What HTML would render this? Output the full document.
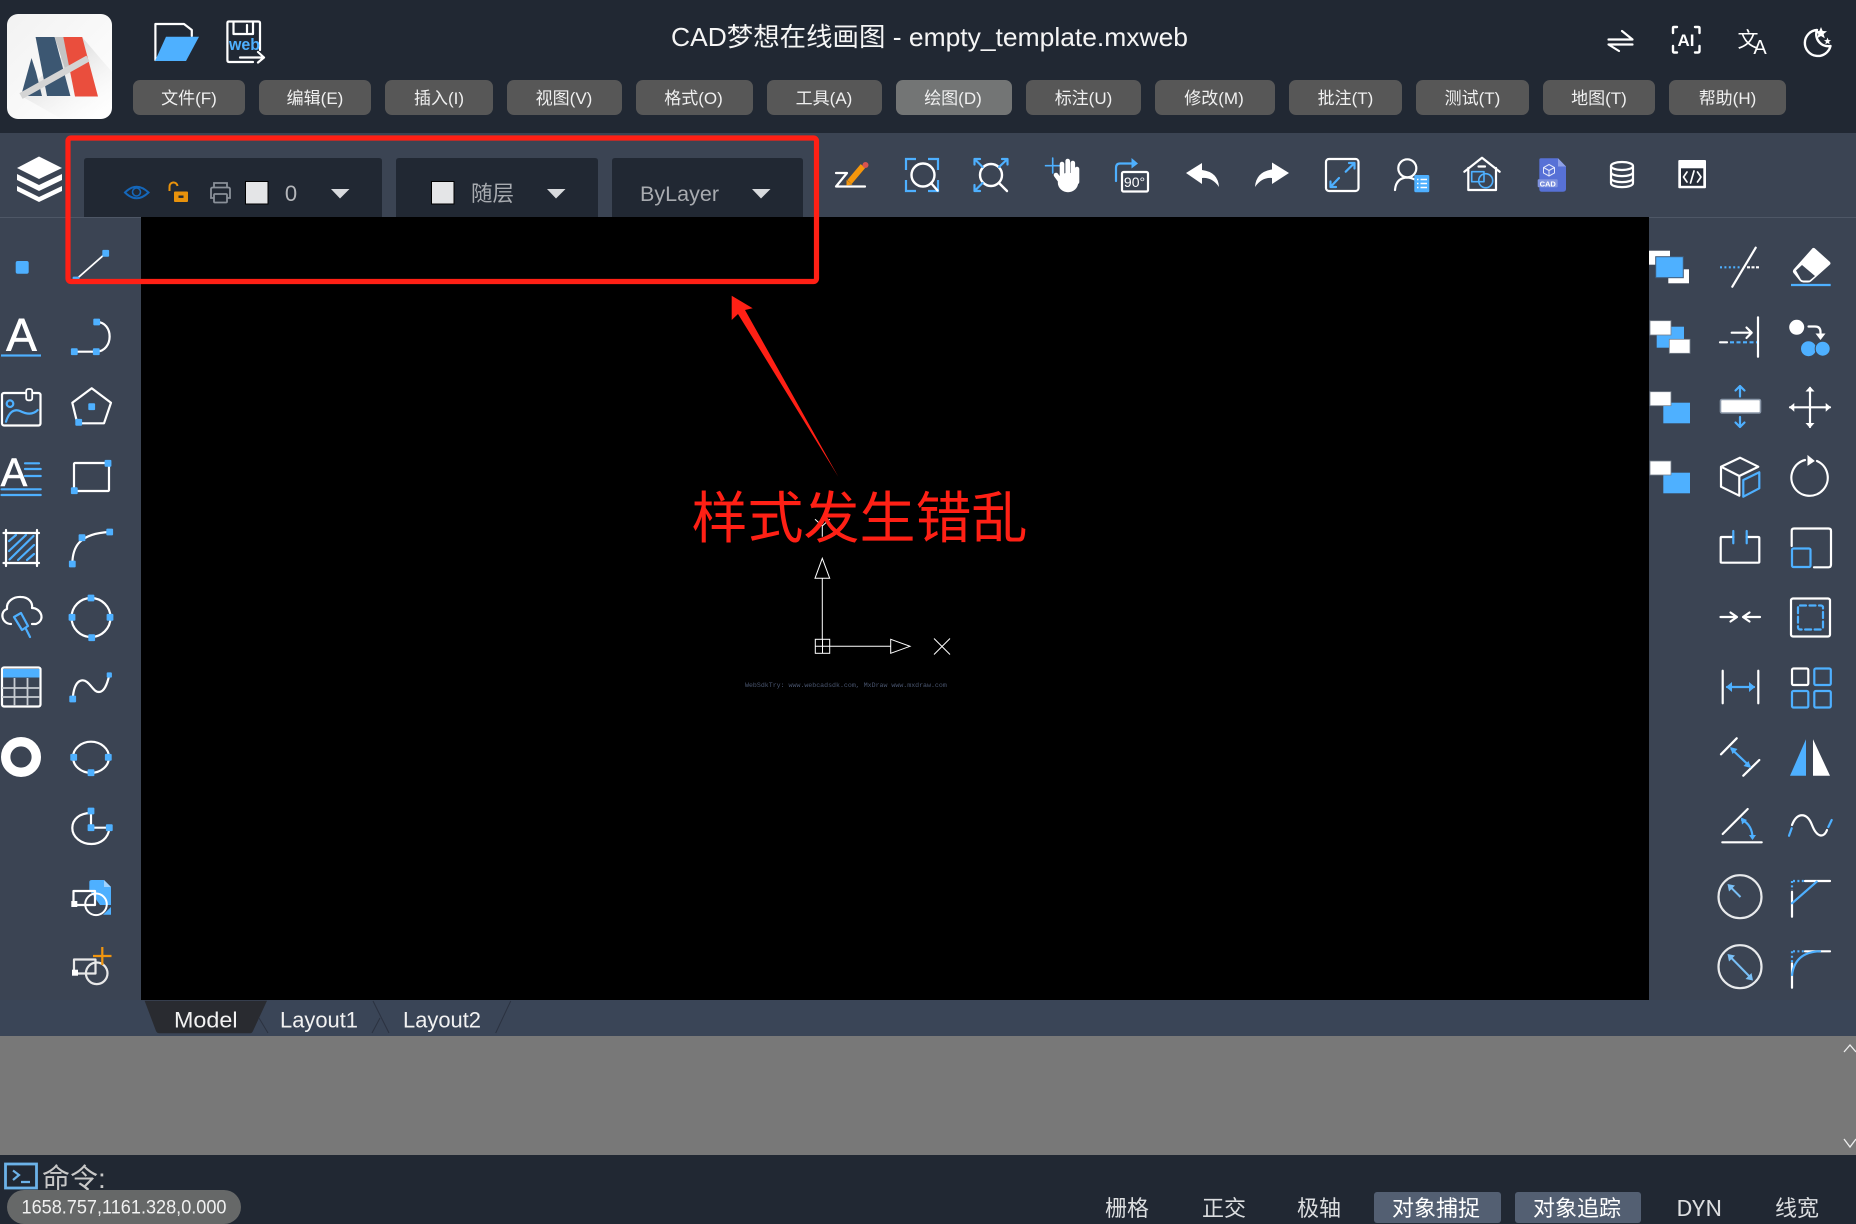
<!DOCTYPE html>
<html lang="zh-CN">
<head>
<meta charset="utf-8">
<title>CAD梦想在线画图</title>
<style>
html,body{margin:0;padding:0;width:1856px;height:1224px;overflow:hidden;background:#3b4453}
svg{position:absolute;left:0;top:0;display:block}
text{font-family:"Liberation Sans","Noto Sans CJK SC",sans-serif}
.w{fill:none;stroke:#fff;stroke-width:2.2;stroke-linecap:round;stroke-linejoin:round}
.b{fill:none;stroke:#4eb0ff;stroke-width:2.2;stroke-linecap:round;stroke-linejoin:round}
.bf{fill:#4eb0ff}
.wf{fill:#fff}
.m{fill:#f0f0f0;font-size:17px;text-anchor:middle}
.s{fill:#dcdee0;font-size:22px;font-family:"WenQuanYi Zen Hei","Noto Sans CJK SC",sans-serif}
</style>
</head>
<body>
<svg width="1856" height="1224" viewBox="0 0 1856 1224" xmlns="http://www.w3.org/2000/svg">
<defs>
<rect id="q" x="-3.4" y="-3.4" width="6.8" height="6.8" rx="1" fill="#4eb0ff"/>
<linearGradient id="lg" x1="0" y1="0" x2="1" y2="1"><stop offset="0" stop-color="#f2f2f2"/><stop offset="1" stop-color="#fff"/></linearGradient>
<linearGradient id="sh" x1="0.2" y1="0" x2="0.9" y2="1"><stop offset="0" stop-color="#c8c8c8"/><stop offset="1" stop-color="#fff" stop-opacity="0"/></linearGradient>
</defs>

<!-- regions -->
<rect x="0" y="0" width="1856" height="133" fill="#212833"/>
<rect x="0" y="133" width="1856" height="84" fill="#3b4453"/>
<rect x="0" y="217" width="141" height="1" fill="#4e5766"/>
<rect x="1649" y="217" width="207" height="1" fill="#4e5766"/>
<rect x="141" y="217" width="1508" height="783" fill="#000"/>
<rect x="0" y="1000" width="1856" height="36" fill="#3a4557"/>
<rect x="0" y="1036" width="1856" height="119" fill="#787878"/>
<rect x="0" y="1155" width="1856" height="69" fill="#212833"/>

<!-- logo -->
<rect x="7" y="14" width="105" height="105" rx="11" fill="url(#lg)"/>
<path d="M82,37 L112,72 V108 A11,11 0 0 1 101,119 H62 L21,96 Z" fill="url(#sh)"/>
<path d="M35.6,37 L54.6,37 L70.4,96 L47,96 Z" fill="#3c5772"/>
<path d="M31.5,58 L21,96 L42,96 L36,72 Z" fill="#3c5772"/>
<path d="M54.6,37 H63.3 L72,62 L66,72 Z" fill="#c4c4c4"/>
<path d="M63.3,37 L82.2,37 L98,96.5 L75,96.5 Z" fill="#ea4e3d"/>
<path d="M21,96 L88,58.5" stroke="#d4d4d4" stroke-width="6.5" fill="none"/>

<!-- folder -->
<path d="M155.4,60 V24 H184 L191.8,30 V36" class="w"/>
<path d="M166,36.7 H199 L186,61 H155 Z" class="bf"/>
<!-- save web -->
<path d="M253,62 H229 Q227.4,62 227.4,60 V23 Q227.4,21.5 229,21.5 H258 Q260,21.5 260,23 V50" class="w"/>
<path d="M233.5,22 V34 H253 V22 M247,25 V32" class="w"/>
<text x="229" y="50" font-size="17" font-weight="700" fill="#4eb0ff" textLength="31" lengthAdjust="spacingAndGlyphs">web</text>
<path d="M240,57.5 H264 M258,52 L264,57.5 L258,62.5" class="w"/>

<!-- title -->
<text x="929.5" y="46" font-size="26" fill="#f5f5f5" text-anchor="middle" textLength="517" lengthAdjust="spacingAndGlyphs">CAD梦想在线画图 - empty_template.mxweb</text>

<!-- right top icons -->
<path d="M1608.5,39.5 H1632.5 L1622,31 M1632.5,44.5 H1608.5 L1619,51" class="w"/>
<path d="M1677,27 H1674 Q1673,27 1673,28 V33 M1695,27 H1698 Q1699.5,27 1699.5,28 V33 M1673,46 V51 Q1673,52.5 1674,52.5 H1677 M1699.5,46 V51 Q1699.5,52.5 1698,52.5 H1695" class="w" style="stroke-width:2.4"/>
<text x="1686" y="46" font-size="17" font-weight="700" fill="#fff" text-anchor="middle">AI</text>
<text x="1748" y="47" font-size="21" fill="#fff" text-anchor="middle">文</text>
<text x="1760" y="54" font-size="20" fill="#fff" text-anchor="middle">A</text>
<path d="M1817,30 A13,13 0 1 0 1830.5,46 A12,12 0 0 1 1817,30 Z" class="w" style="stroke-width:2.4"/>
<path d="M1821,27 L1822.7,31 L1827,31.3 L1823.6,34 L1824.8,38.2 L1821,36 L1817.2,38.2 L1818.4,34 L1815,31.3 L1819.3,31 Z" class="wf"/>
<path d="M1827.5,37.5 L1828.5,40 L1831,40.2 L1829,41.8 L1829.7,44.2 L1827.5,43 L1825.3,44.2 L1826,41.8 L1824,40.2 L1826.5,40 Z" class="wf"/>

<!-- menu -->
<g fill="#575757">
<rect x="133" y="80" width="112" height="35" rx="7"/>
<rect x="259" y="80" width="112" height="35" rx="7"/>
<rect x="385" y="80" width="108" height="35" rx="7"/>
<rect x="507" y="80" width="115" height="35" rx="7"/>
<rect x="636" y="80" width="117" height="35" rx="7"/>
<rect x="767" y="80" width="115" height="35" rx="7"/>
<rect x="896" y="80" width="116" height="35" rx="7" fill="#737575"/>
<rect x="1026" y="80" width="115" height="35" rx="7"/>
<rect x="1155" y="80" width="120" height="35" rx="7"/>
<rect x="1289" y="80" width="113" height="35" rx="7"/>
<rect x="1416" y="80" width="113" height="35" rx="7"/>
<rect x="1543" y="80" width="112" height="35" rx="7"/>
<rect x="1669" y="80" width="117" height="35" rx="7"/>
</g>
<text class="m" x="189" y="104">文件(F)</text>
<text class="m" x="315" y="104">编辑(E)</text>
<text class="m" x="439" y="104">插入(I)</text>
<text class="m" x="564" y="104">视图(V)</text>
<text class="m" x="693.5" y="104">格式(O)</text>
<text class="m" x="824" y="104">工具(A)</text>
<text class="m" x="953" y="104">绘图(D)</text>
<text class="m" x="1083.5" y="104">标注(U)</text>
<text class="m" x="1214" y="104">修改(M)</text>
<text class="m" x="1345.5" y="104">批注(T)</text>
<text class="m" x="1472.5" y="104">测试(T)</text>
<text class="m" x="1599" y="104">地图(T)</text>
<text class="m" x="1727.5" y="104">帮助(H)</text>

<!-- layers icon -->
<path d="M39,156.5 L62,168 L39,179 L17,168 Z" class="wf"/>
<path d="M17,174 L39,185 L62,174 L62,180 L39,191 L17,180 Z" class="wf"/>
<path d="M17,186 L39,197 L62,186 L62,191 L39,202 L17,191 Z" class="wf"/>

<!-- dropdowns -->
<path d="M84,217 V161 Q84,158 87,158 H379 Q382,158 382,161 V217 Z" fill="#212833"/>
<path d="M396,217 V161 Q396,158 399,158 H595 Q598,158 598,161 V217 Z" fill="#212833"/>
<path d="M612,217 V161 Q612,158 615,158 H800 Q803,158 803,161 V217 Z" fill="#212833"/>
<!-- eye -->
<path d="M125,192.5 Q136.5,181 148.5,192.5 Q136.5,204 125,192.5 Z" fill="none" stroke="#1567ba" stroke-width="2"/>
<circle cx="136.5" cy="192" r="4" fill="none" stroke="#1567ba" stroke-width="1.6"/>
<!-- lock -->
<path d="M169.5,191 V187 A4,4 0 0 1 177.5,186" fill="none" stroke="#e8920c" stroke-width="2"/>
<rect x="174" y="191.5" width="14" height="10.5" rx="1" fill="#e8920c"/>
<rect x="178.5" y="195.5" width="5" height="2.4" fill="#212833"/>
<!-- printer -->
<path d="M214,188 V183 H227 V188 M214,198 H211 V189 Q211,187.5 213,187.5 H228 Q230,187.5 230,189 V198 H227" fill="none" stroke="#8a9099" stroke-width="1.8"/>
<rect x="214" y="194" width="13" height="8.5" rx="1" fill="none" stroke="#8a9099" stroke-width="1.8"/>
<rect x="245.5" y="181.5" width="22.5" height="22.5" fill="#e4e5e7" stroke="#000" stroke-width="1"/>
<text x="291" y="201" font-size="22" fill="#b4b6ba" text-anchor="middle">0</text>
<path d="M331,189 H349.5 L340,198.5 Z" fill="#d8dadd"/>
<rect x="431.5" y="181.5" width="22.5" height="22.5" fill="#e4e5e7" stroke="#000" stroke-width="1"/>
<text x="471" y="201" font-size="21.5" fill="#a8abb0">随层</text>
<path d="M547,189 H565.5 L556,198.5 Z" fill="#d8dadd"/>
<text x="640" y="201" font-size="21" fill="#a8abb0" textLength="79" lengthAdjust="spacingAndGlyphs">ByLayer</text>
<path d="M752,189 H770.5 L761,198.5 Z" fill="#d8dadd"/>

<!-- toolbar icons -->
<path d="M836,173 H847 L836,186.5 H865" class="w"/>
<path d="M863,166 L849.5,182" stroke="#f5960c" stroke-width="6" fill="none"/>
<path d="M846.5,180 L852.5,184.5 L846.5,185.5 Z" fill="#f5960c"/>
<circle cx="865.5" cy="165" r="3" fill="#d9534f"/>

<path d="M906,170 V159 H916 M928,159 H938 V170 M906,180 V191 H916 M928,191 H938 V180" class="b" style="stroke-linecap:butt;stroke-linejoin:miter"/>
<circle cx="923" cy="175" r="11.5" class="w" style="stroke-width:2.4"/>
<path d="M931,183 L937.5,190.5" class="w" style="stroke-width:2.4"/>

<circle cx="991" cy="175" r="11" class="w" style="stroke-width:2.4"/>
<path d="M999,183 L1007,191" class="w" style="stroke-width:2.4"/>
<path d="M982.6,167 L975,159.5 M974.5,164.5 V159 H980 M999,167 L1007,159.5 M1002,159 H1007.5 V164.5 M982.6,183 L975,190.5 M974.5,185 V191 H980" class="b"/>

<path d="M1045.5,165.7 H1060.5 M1052.7,158 V173" class="b" style="stroke-width:1.6"/>
<g stroke="#fff" stroke-width="4.6" stroke-linecap="round" fill="none">
<path d="M1062,164 V180 M1067.7,161 V180 M1072.8,163 V180 M1077,169 V182 M1056,175 L1064,186"/>
</g>
<ellipse cx="1068" cy="182.5" rx="10.2" ry="9.7" fill="#fff"/>

<rect x="1122" y="172" width="26" height="19.5" rx="1.5" class="w"/>
<text x="1134.5" y="187" font-size="14" fill="#fff" text-anchor="middle">90°</text>
<path d="M1116,181 V168 Q1116,163.5 1120,163.5 H1132" class="b"/>
<path d="M1131.5,158 L1138,163.5 L1131.5,168.5 Z" class="bf"/>

<path d="M1186,173 L1202,163 V170 Q1218,172 1219,187 Q1212,177 1202,178 V184 Z" class="wf"/>
<path d="M1289,173 L1272,162.5 V169.5 Q1256,172 1255,187 Q1262,177 1272,178 V184 Z" class="wf"/>

<rect x="1326" y="159" width="32.5" height="32" rx="3" class="w"/>
<path d="M1345.7,171.7 L1354,163.5 M1349,163 H1354.5 V168.5 M1339,178 L1330.7,186.7 M1330.5,181.5 V187 H1336" class="b"/>

<circle cx="1407.3" cy="168.3" r="9" class="w"/>
<path d="M1395,190 Q1396,178 1407,177.5 Q1411,177.5 1416,180" class="w"/>
<rect x="1414.3" y="175" width="15" height="17.3" rx="1.5" class="bf"/>
<path d="M1417,179.5 H1418.5 M1420.5,179.5 H1427 M1417,183.5 H1418.5 M1420.5,183.5 H1427 M1417,187.5 H1418.5 M1420.5,187.5 H1427" stroke="#fff" stroke-width="1.5"/>

<path d="M1464.3,171.7 L1482,157.7 L1499.7,171.7 M1468.3,168 V190 H1496 V168 M1478.5,166.5 H1485" class="w"/>
<rect x="1471.7" y="171.7" width="12.3" height="10" class="b" style="stroke-width:1.6"/>
<circle cx="1485.7" cy="180.7" r="7" class="b" style="stroke-width:1.6"/>

<path d="M1541,158.3 H1558 L1566,166.5 V189 Q1566,191.7 1563,191.7 H1541.5 Q1539.3,191.7 1539.3,189 V160 Q1539.3,158.3 1541,158.3 Z" fill="#5771d6"/>
<path d="M1558,158.3 L1566,166.5 H1558 Z" fill="#8fa1e6"/>
<rect x="1537.7" y="179.3" width="20" height="8" rx="1" fill="#7f93df"/>
<text x="1547.7" y="186.5" font-size="7.5" font-weight="700" fill="#fff" text-anchor="middle">CAD</text>
<path d="M1549,164.5 L1554.5,167.5 V173 L1549,176 L1543.5,173 V167.5 Z M1543.5,167.5 L1549,170.5 L1554.5,167.5 M1549,170.5 V176" fill="none" stroke="#e4e9fb" stroke-width="1"/>

<ellipse cx="1622" cy="166" rx="11" ry="4" class="w"/>
<path d="M1611,166 V183 C1611,188.5 1633,188.5 1633,183 V166 M1611,172 C1611,177.5 1633,177.5 1633,172 M1611,178 C1611,183.5 1633,183.5 1633,178" class="w"/>

<rect x="1678.3" y="160" width="27.7" height="28.3" rx="1" class="wf"/>
<rect x="1681" y="168.3" width="22.3" height="17.5" fill="#252c38"/>
<path d="M1687,172 L1683.5,177 L1687,182 M1697.5,172 L1701,177 L1697.5,182 M1694,171 L1690.5,183" class="w" style="stroke-width:1.7"/>

<!-- left icons -->
<rect x="15.7" y="261" width="13" height="12.7" rx="2" class="bf"/>
<path d="M76,279.5 L105.5,253.5" class="w" style="stroke-width:1.8"/>
<use href="#q" x="105.7" y="253.3"/>
<use href="#q" x="76" y="280"/>

<text x="21.5" y="351" font-size="46" fill="#fff" text-anchor="middle" stroke="#fff" stroke-width=".6">A</text>
<rect x="1" y="354.4" width="40" height="2.2" class="bf"/>
<path d="M74.3,351.7 H96.3 C114,351 114,322 96.7,322" class="w"/>
<use href="#q" x="96.7" y="322"/><use href="#q" x="74.3" y="351.7"/><use href="#q" x="96.3" y="351.7"/>

<rect x="2" y="393" width="38.5" height="32.5" rx="2" class="w"/>
<rect x="26.2" y="389" width="6" height="11.3" rx="2" fill="#3b4453" stroke="#fff" stroke-width="1.8"/>
<circle cx="10" cy="403.7" r="3.3" class="b"/>
<path d="M6,421.7 C9,412 14,408.5 20,411 C27,414.5 33,415 37.7,410" class="b"/>
<path d="M91.7,388.3 L111,402.7 L104,423.3 H77.3 L72.3,402.7 Z" class="w"/>
<use href="#q" x="91.7" y="406.7"/><use href="#q" x="78.7" y="422.3"/>

<text x="14" y="486" font-size="40" fill="#fff" text-anchor="middle" stroke="#fff" stroke-width=".5">A</text>
<path d="M25,463.3 H39 M25,469 H40.7 M25,476 H40.7 M1.5,489.3 H40.7 M1.5,495 H40.7" class="b"/>
<rect x="74" y="463" width="35" height="28" rx="1" class="w"/>
<use href="#q" x="108" y="463.3"/><use href="#q" x="74.3" y="490.7"/>

<path d="M3.5,533 H39 M3.5,563 H39 M6,530 V566 M37,530 V566" class="w"/>
<path d="M9,541 L16,535 M9,551 L26,535 M9.5,559.5 L33.5,536 M18,560 L34,545 M27,560 L34,554" class="b"/>
<path d="M72.3,564 C72.5,548 78,533.5 109.7,532" class="w"/>
<use href="#q" x="72.3" y="564"/><use href="#q" x="82" y="537.7"/><use href="#q" x="109.7" y="532"/>

<path d="M11,624 C2,624 -1,612 7,609 C6,601 14,596.5 21,597 C28,597 33,602 32,608 C41,608 46,620 36,624 H32" class="w"/>
<path d="M14,617 L21,613 L28,626 L22,630 Z M26,629 L30,637" class="b"/>
<circle cx="91" cy="617.5" r="19.5" class="w"/>
<use href="#q" x="91" y="598"/><use href="#q" x="72" y="617.3"/><use href="#q" x="110" y="617.3"/><use href="#q" x="91.7" y="637.7"/>

<rect x="2" y="667.5" width="38.5" height="39" rx="2" class="w"/>
<rect x="3" y="669" width="36.5" height="8.5" class="bf"/>
<path d="M2,688 H40 M2,697 H40 M14.5,678 V706 M27.5,678 V706" stroke="#c8ccd2" stroke-width="1.8"/>
<path d="M72.7,699 C74,680 82,678 87,682 C92,686 94,692 99,692 C104,692 107,685 109.3,675" class="w"/>
<use href="#q" x="72.7" y="699"/><rect x="106.7" y="672.4" width="5.2" height="5.2" rx="1" class="bf"/>

<circle cx="21" cy="757" r="15.3" fill="none" stroke="#fff" stroke-width="9.4"/>
<ellipse cx="91" cy="757.3" rx="18" ry="15.6" class="w"/>
<use href="#q" x="73.7" y="757.3"/><use href="#q" x="108.3" y="757.3"/><use href="#q" x="91" y="772.7"/>

<path d="M91,813 C80,813 72.3,819 72.3,828 C72.3,837 81,844 91.5,844 C101,844 108,838 109.3,829" class="w"/>
<path d="M91,811 V827.7 H109.3" class="w"/>
<use href="#q" x="91" y="811"/><use href="#q" x="109.3" y="827.7"/><use href="#q" x="91" y="827.7"/>

<path d="M89.3,890 V882 Q89.3,880 92,880 H104 L111,887 V905 H100 Z" class="bf"/>
<path d="M111,907 V914.7 H103 Z" class="bf"/>
<path d="M104,880 L111,887 H104 Z" fill="#9fd2ff"/>
<rect x="73.5" y="891" width="21.5" height="14" class="w"/>
<circle cx="96" cy="904.3" r="10.8" fill="none" stroke="#fff" stroke-width="2"/>
<rect x="71.3" y="901" width="6" height="6" class="wf"/>

<rect x="74" y="959.5" width="21.5" height="14" class="w" style="stroke:#e8e8e8"/>
<circle cx="96.7" cy="973.3" r="10.8" class="w" style="stroke:#e8e8e8"/>
<rect x="72" y="969.7" width="6" height="6" class="wf"/>
<path d="M102.3,947 V965 M93,956 H111.5" fill="none" stroke="#f0950f" stroke-width="2.2"/>

<!-- right col1 -->
<rect x="1649" y="250.7" width="21" height="14" class="wf"/>
<rect x="1668.3" y="269.3" width="20.7" height="14" class="wf"/>
<rect x="1655.7" y="256.7" width="27.6" height="21" class="bf" stroke="#3f5a78" stroke-width="1"/>
<rect x="1656.7" y="326.7" width="27.3" height="21" class="bf"/>
<rect x="1650" y="320.7" width="21" height="14.3" class="wf" stroke="#77808c" stroke-width=".8"/>
<rect x="1669.3" y="339.3" width="20.7" height="14" class="wf" stroke="#77808c" stroke-width=".8"/>
<rect x="1663.3" y="402.7" width="26.7" height="20.6" class="bf"/>
<rect x="1650" y="391.7" width="21" height="14" class="wf" stroke="#77808c" stroke-width=".8"/>
<rect x="1663.3" y="472.7" width="26.7" height="20.6" class="bf"/>
<rect x="1650" y="461" width="21" height="14" class="wf" stroke="#77808c" stroke-width=".8"/>

<!-- right col2 -->
<path d="M1755.7,247.7 L1732.3,286.7" class="w"/>
<path d="M1720,267.3 H1741" class="b" stroke-dasharray="2 2.4" style="stroke-linecap:butt"/>
<path d="M1747,267.3 H1759" class="w" stroke-dasharray="3 1.5" style="stroke-linecap:butt"/>

<path d="M1758,317.3 V356.7 M1731.7,332.7 H1751.7 M1746.5,327.5 L1751.7,332.7 L1746.5,338 M1720,342.3 H1727" class="w"/>
<path d="M1730,342.3 H1757" class="b" stroke-dasharray="4 2.5" style="stroke-linecap:butt"/>

<rect x="1720.5" y="399.5" width="40" height="13.5" rx="1.5" fill="#fff" stroke="#8a97a8" stroke-width="1.6"/>
<path d="M1740,386 V396.5 M1735.5,390.5 L1740,386 L1744.5,390.5 M1740,417 V427 M1735.5,422.5 L1740,427 L1744.5,422.5" class="b"/>

<path d="M1740,457.7 L1758.3,466.7 L1739.3,476 L1721,466.7 Z M1721,466.7 V486.7 L1739.3,495.7 V476" class="w"/>
<path d="M1743.3,480 L1759.3,472.3 V488.3 L1743.3,496.7 Z" class="b"/>

<path d="M1733.3,537 H1721.5 Q1720.7,537 1720.7,538 V562 Q1720.7,562.7 1722,562.7 H1758 Q1759.3,562.7 1759.3,562 V538 Q1759.3,537 1758,537 H1746.7" class="w"/>
<path d="M1733.3,531 V543.3 M1746.7,531 V543.3" class="b"/>

<path d="M1720.5,617 H1736 M1730.5,612.5 L1737,617 L1730.5,621.5 M1760,617 H1743.5 M1749.5,612.5 L1743,617 L1749.5,621.5" class="w"/>

<path d="M1722.7,670.7 V703.3 M1758.3,670.7 V703.3" class="w"/>
<path d="M1727,687 H1754" class="b"/>
<path d="M1726,687 L1732,682 V692 Z M1755,687 L1749,682 V692 Z" class="bf"/>

<path d="M1721,754.3 L1736.7,738.3 M1743.3,775.7 L1759.3,760" class="w"/>
<path d="M1731.5,749 L1749.5,766" class="b"/>
<path d="M1730,747 L1737.5,749 L1732.5,754 Z M1751,768 L1743.5,766 L1748.5,761 Z" class="bf"/>

<path d="M1722.7,834 L1747.7,809 M1722.3,842.3 H1761.7" class="w"/>
<path d="M1742,820 C1749,823 1752.5,830 1752.5,838" class="b"/>
<path d="M1741,817.5 L1747,820 L1742,824.5 Z M1749,835 H1756 L1752.5,840 Z" class="bf"/>

<circle cx="1740" cy="896.7" r="21.5" class="w" style="stroke:#e8eaec"/>
<path d="M1740.5,897 L1729.5,886" stroke="#79bff5" stroke-width="2"/>
<path d="M1727.5,884 L1735,885.5 L1729,891.5 Z" fill="#79bff5"/>
<circle cx="1740" cy="966.7" r="21.5" class="w" style="stroke:#e8eaec"/>
<path d="M1729.5,956 L1751.5,978.5" stroke="#79bff5" stroke-width="2"/>
<path d="M1727.5,954 L1735,955.5 L1729,961.5 Z M1753,980.5 L1745.5,979 L1751.5,973 Z" fill="#79bff5"/>

<!-- right col3 -->
<path d="M1812.7,248 Q1814,247.5 1815,248.5 L1830,262 Q1831,263.5 1830,264.5 L1811,281.5 Q1810,282.5 1808,282.5 H1803.5 Q1801.5,282.5 1800,281 L1793.5,273 Q1792,271 1794,269 Z" class="wf"/>
<path d="M1796,270.5 L1802,265 L1815,276 L1809.5,280.5 H1803.5 Q1802,280.5 1801,279.5 Z" fill="#3b4453"/>
<path d="M1791,285 H1830.7" class="b" style="stroke-linecap:butt"/>

<circle cx="1796.7" cy="327.3" r="7.5" class="wf"/>
<path d="M1808.5,326.5 H1815 Q1820.5,326.5 1820.5,332 V336" class="w"/>
<path d="M1815.5,333.5 H1825.5 L1820.5,340 Z" class="wf"/>
<circle cx="1808.5" cy="348.7" r="7.5" class="bf"/>
<circle cx="1822.7" cy="348.7" r="7.5" class="bf" stroke="#3b4453" stroke-width="1"/>

<path d="M1810,388 V427 M1790,407.3 H1830" class="w"/>
<path d="M1810,386.5 L1814.5,391.5 H1805.5 Z M1810,428 L1814.5,423 H1805.5 Z M1789.3,407.3 L1794.3,403 V411.7 Z M1830.7,407.3 L1825.7,403 V411.7 Z" class="wf"/>

<path d="M1817,461 A18.2,18.2 0 1 1 1805,460" class="w"/>
<path d="M1808,456 L1814,461 L1808,465 Z" class="wf" stroke="#fff"/>

<path d="M1791.7,546 V531 Q1791.7,528.5 1794,528.5 H1828.5 Q1831,528.5 1831,531 V564.5 Q1831,567.3 1828.5,567.3 H1814" class="w"/>
<rect x="1792" y="548.5" width="18.5" height="18.5" rx="1.5" class="b"/>

<rect x="1791" y="598.5" width="39" height="38" rx="2" class="w"/>
<rect x="1798" y="605.5" width="25" height="24" rx="2" class="b" stroke-dasharray="6 3.5"/>

<rect x="1792" y="668.5" width="16.3" height="16.5" rx="1.5" class="w"/>
<rect x="1814.3" y="668.5" width="16.5" height="16.5" rx="1.5" class="b"/>
<rect x="1792" y="691" width="16.3" height="16.5" rx="1.5" class="b"/>
<rect x="1814.3" y="691" width="16.5" height="16.5" rx="1.5" class="b"/>

<path d="M1806,739.3 V775.7 H1790 Z" class="bf"/>
<path d="M1813,739.3 V775.7 H1830 Z" class="wf"/>

<path d="M1789,835.7 L1791.7,828.3 M1828.3,827 L1831.7,820" class="b"/>
<path d="M1792,825 C1797,812 1807,812 1812,825 C1817,838 1824,838 1827,830" class="w"/>

<path d="M1792,891.7 V916.7 M1805,881 H1830" class="w"/>
<path d="M1792,903.3 L1816.7,881.7" class="b"/>
<path d="M1792,881 V890 M1793,881 H1804" class="b" stroke-dasharray="2 2.4" style="stroke-linecap:butt"/>

<path d="M1792,963.3 V987.7 M1805,951.3 H1830" class="w"/>
<path d="M1792,975 Q1795,952 1820,951.3" class="b"/>
<path d="M1792,951.3 V962 M1793,951.3 H1804" class="b" stroke-dasharray="2 2.4" style="stroke-linecap:butt"/>

<!-- ucs -->
<g fill="none" stroke="#fff" stroke-width="1">
<path d="M822.3,558.3 L815,578.3 H829.7 Z"/>
<path d="M822.3,578.3 V639.3"/>
<rect x="815.3" y="639.3" width="14.4" height="14"/>
<path d="M822.5,639.3 V653.3 M815.3,646.3 H829.7 H890.7"/>
<path d="M890.7,639.3 V653.3 L910,646.3 Z"/>
<path d="M934,638.5 L950,654.5 M950,638.5 L934,654.5"/>
<path d="M815,519.3 L822.3,526 L829.7,519.3 M822.3,526 V536.7"/>
</g>
<text x="745" y="687" font-size="6.6" style="font-family:'Liberation Mono',monospace" fill="#4a5670">WebSdkTry: www.webcadsdk.com, MxDraw www.mxdraw.com</text>

<!-- annotation -->
<text x="859.5" y="538" font-size="56" fill="#ff2015" text-anchor="middle" style="font-family:'Noto Sans CJK SC',sans-serif">样式发生错乱</text>
<rect x="68" y="138" width="748.5" height="143.5" rx="3" fill="none" stroke="#ff2015" stroke-width="5.2"/>
<path d="M731.7,295.7 L752.7,308.3 L745,310 L838.3,476.7 L738,314 L731.7,320 Z" fill="#ff2015"/>

<!-- tabs -->
<path d="M144.6,1000.7 L156,1031 Q157,1033.3 159.6,1033.3 H250 Q252,1033.3 253,1031 L267,1000.7 Z" fill="#292b30"/>
<path d="M259,1018 L268,1033 M373,1001 L389,1033 M380,1018 L372,1033 M510.7,1001 L495.7,1033" stroke="#2b3240" stroke-width="1" fill="none"/>
<text x="174" y="1027.5" font-size="22" fill="#f2f2f2" textLength="63.5" lengthAdjust="spacingAndGlyphs">Model</text>
<text x="280" y="1027.5" font-size="22" fill="#f2f2f2" textLength="78" lengthAdjust="spacingAndGlyphs">Layout1</text>
<text x="403" y="1027.5" font-size="22" fill="#f2f2f2" textLength="78" lengthAdjust="spacingAndGlyphs">Layout2</text>

<!-- scroll arrows -->
<path d="M1844,1052 L1850,1045 L1856,1052 M1844,1139 L1850,1147 L1856,1139" fill="none" stroke="#eee" stroke-width="1.3"/>

<!-- command -->
<rect x="5.5" y="1164" width="31" height="24" fill="#212833" stroke="#6cb2e8" stroke-width="2.8"/>
<path d="M13,1170.5 L19,1175 L13,1180 M21,1182 H30" fill="none" stroke="#6cb2e8" stroke-width="2.2"/>
<text x="42" y="1188" font-size="28" fill="#c8c8c8">命令:</text>
<rect x="7" y="1190" width="234" height="34" rx="17" fill="#666868"/>
<text x="21.5" y="1213.5" font-size="19" fill="#f0f0f0" textLength="205" lengthAdjust="spacingAndGlyphs">1658.757,1161.328,0.000</text>

<!-- status -->
<rect x="1374" y="1192" width="127" height="31" rx="3" fill="#535f72"/>
<rect x="1515" y="1192" width="126" height="31" rx="3" fill="#535f72"/>
<text class="s" x="1105" y="1216">栅格</text>
<text class="s" x="1202" y="1216">正交</text>
<text class="s" x="1297" y="1216">极轴</text>
<text class="s" x="1392" y="1216" style="fill:#fff">对象捕捉</text>
<text class="s" x="1533" y="1216" style="fill:#fff">对象追踪</text>
<text class="s" x="1676" y="1216" textLength="46.5" lengthAdjust="spacingAndGlyphs">DYN</text>
<text class="s" x="1775" y="1216">线宽</text>
</svg>
</body>
</html>
